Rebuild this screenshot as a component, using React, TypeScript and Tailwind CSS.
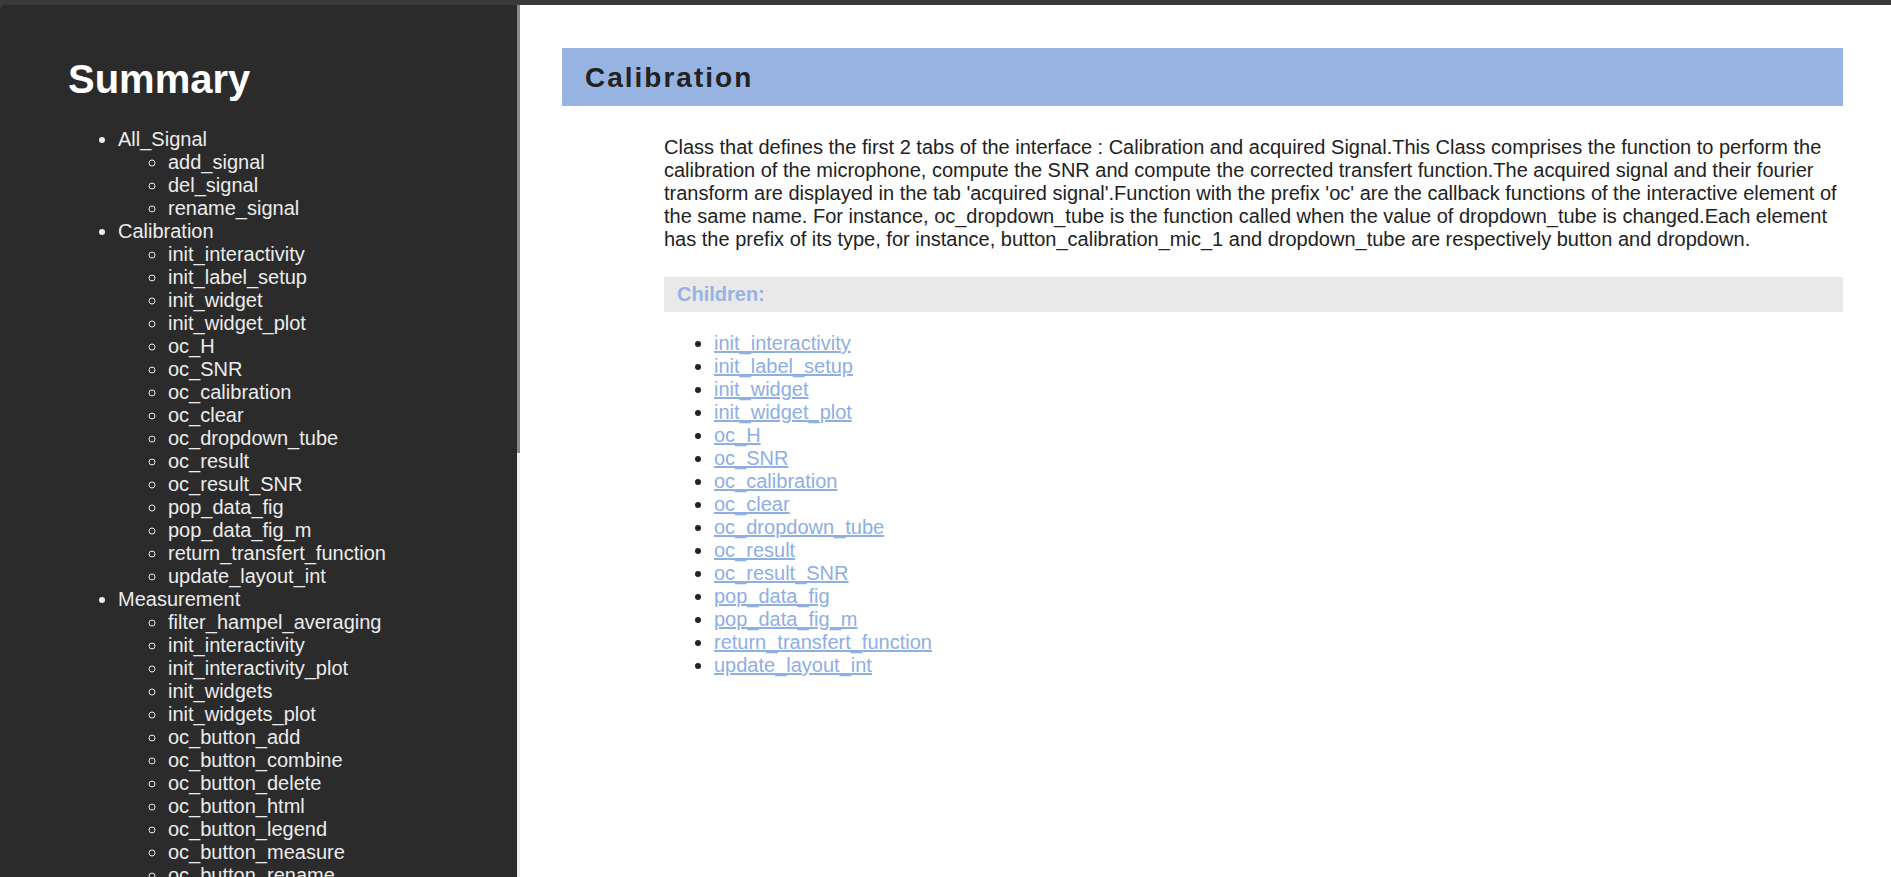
import React from "react";

const summary: { name: string; children: string[] }[] = [
  { name: "All_Signal", children: ["add_signal", "del_signal", "rename_signal"] },
  {
    name: "Calibration",
    children: [
      "init_interactivity",
      "init_label_setup",
      "init_widget",
      "init_widget_plot",
      "oc_H",
      "oc_SNR",
      "oc_calibration",
      "oc_clear",
      "oc_dropdown_tube",
      "oc_result",
      "oc_result_SNR",
      "pop_data_fig",
      "pop_data_fig_m",
      "return_transfert_function",
      "update_layout_int",
    ],
  },
  {
    name: "Measurement",
    children: [
      "filter_hampel_averaging",
      "init_interactivity",
      "init_interactivity_plot",
      "init_widgets",
      "init_widgets_plot",
      "oc_button_add",
      "oc_button_combine",
      "oc_button_delete",
      "oc_button_html",
      "oc_button_legend",
      "oc_button_measure",
      "oc_button_rename",
      "oc_button_save",
      "oc_dropdown",
    ],
  },
];

const children = summary[1].children;

export default function App() {
  return (
    <div className="h-screen overflow-hidden bg-[#3a3a3a] pt-[5px] flex font-['Liberation_Sans',Arial,sans-serif]">
      {/* Sidebar */}
      <aside className="w-[520px] shrink-0 h-full bg-[#2b2b2b] rounded-tl-md flex overflow-hidden">
        <div className="flex-1 pl-[68px] pt-[51px] text-[#ececec] text-[20px] leading-[23px]">
          <h1 className="text-[40px] leading-[46px] font-bold text-white mb-[26px]">
            Summary
          </h1>
          <ul className="list-disc pl-[50px]">
            {summary.map((s) => (
              <li key={s.name}>
                {s.name}
                <ul className="list-[circle] pl-[50px]">
                  {s.children.map((c) => (
                    <li key={c}>{c}</li>
                  ))}
                </ul>
              </li>
            ))}
          </ul>
        </div>
        {/* scrollbar */}
        <div className="w-[3px] shrink-0 bg-[#f0f0f0]">
          <div className="h-[448px] bg-[#8a8a8a]" />
        </div>
      </aside>

      {/* Main */}
      <main className="flex-1 h-full bg-white pl-[42px] pr-[48px] pt-[43px] text-[20px] leading-[23px] text-[#222]">
        <div className="h-[58px] bg-[#97b3e1] pl-[23px] flex items-center">
          <h2 className="text-[28px] font-bold tracking-[2px] text-[#222]">Calibration</h2>
        </div>

        <div className="ml-[102px]">
          <p className="mt-[30px]">
            Class that defines the first 2 tabs of the interface : Calibration and acquired
            Signal.This Class comprises the function to perform the calibration of the
            microphone, compute the SNR and compute the corrected transfert function.The acquired
            signal and their fourier transform are displayed in the tab 'acquired
            signal'.Function with the prefix 'oc' are the callback functions of the interactive
            element of the same name. For instance, oc_dropdown_tube is the function called when
            the value of dropdown_tube is changed.Each element has the prefix of its type, for
            instance, button_calibration_mic_1 and dropdown_tube are respectively button and
            dropdown.
          </p>

          <div className="mt-[26px] h-[35px] bg-[#e9e9e9] pl-[13px] flex items-center">
            <span className="font-bold text-[#98b3e3]">Children:</span>
          </div>

          <ul className="mt-[20px] list-disc pl-[50px]">
            {children.map((c) => (
              <li key={c}>
                <a href="#" className="text-[#8eaee4] underline">
                  {c}
                </a>
              </li>
            ))}
          </ul>
        </div>
      </main>
    </div>
  );
}
